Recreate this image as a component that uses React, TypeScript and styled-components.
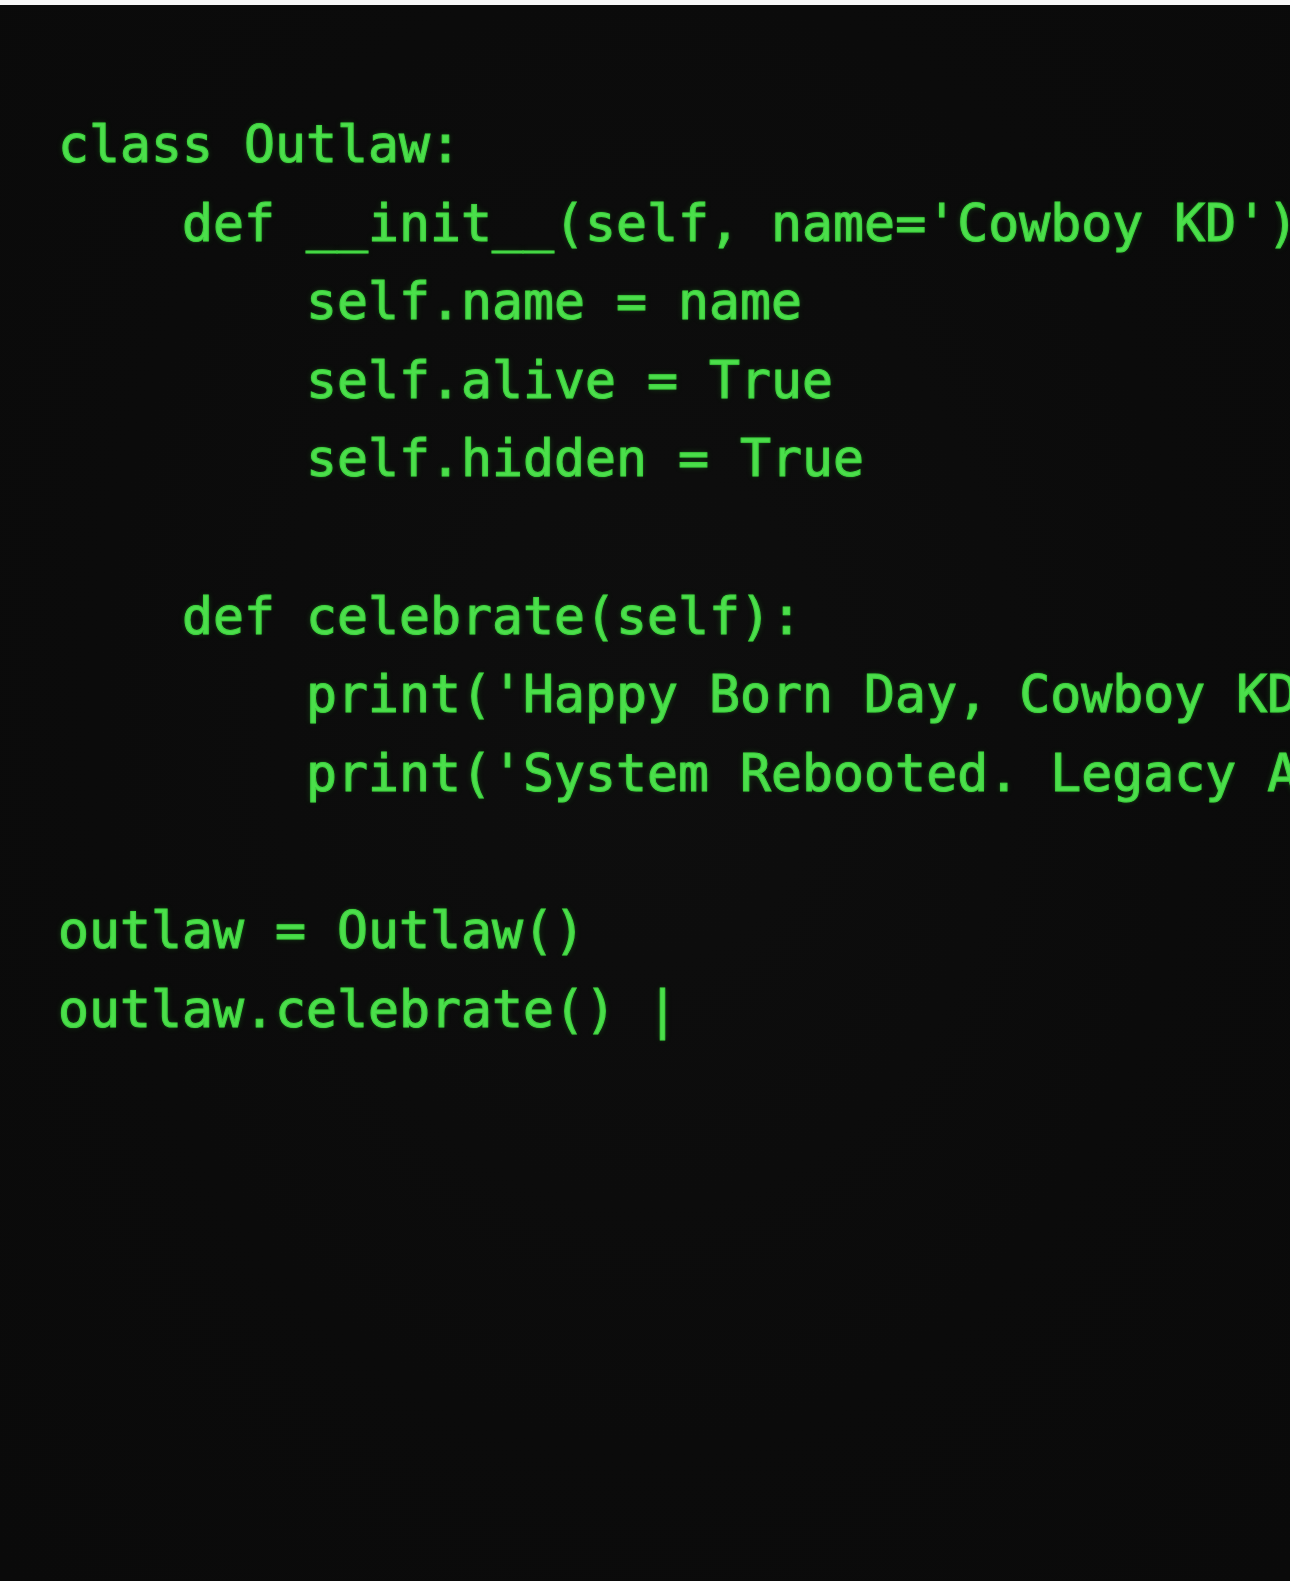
import React from "react";
import styled, { createGlobalStyle } from "styled-components";

const Global = createGlobalStyle`
  html, body {
    margin: 0;
    padding: 0;
    background: #0b0b0b;
  }
  body {
    width: 1290px;
    height: 1581px;
    overflow: hidden;
  }
`;

const Screen = styled.div`
  width: 1290px;
  height: 1581px;
  display: flex;
  flex-direction: column;
  background: #0b0b0b;
  overflow: hidden;
`;

const TopStrip = styled.div`
  height: 5px;
  flex: none;
  background: #f7f7f7;
`;

const Terminal = styled.div`
  flex: 1;
  padding: 100px 0 0 58px;
  background: radial-gradient(ellipse at 50% 45%, #0e0e0e 0%, #0b0b0b 60%, #0a0a0a 100%);
  overflow: hidden;
`;

const Code = styled.pre`
  margin: 0;
  font-family: "DejaVu Sans Mono", "Liberation Mono", monospace;
  font-weight: normal;
  font-size: 51.5px;
  line-height: 78.6px;
  color: #4bdf4b;
  -webkit-text-stroke: 1.1px #3fd23f;
  text-shadow: 0 0 2px rgba(50, 210, 50, 0.7), 0 0 6px rgba(50, 210, 50, 0.25);
  white-space: pre;
`;

const Line = styled.div<{ $indent: number }>`
  padding-left: ${(p) => p.$indent * 0.602}em;
  min-height: 78.6px;
  white-space: pre;
`;

const lines: [number, string][] = [
  [0, "class Outlaw:"],
  [4, "def __init__(self, name='Cowboy KD'):"],
  [8, "self.name = name"],
  [8, "self.alive = True"],
  [8, "self.hidden = True"],
  [0, ""],
  [4, "def celebrate(self):"],
  [8, "print('Happy Born Day, Cowboy KD!')"],
  [8, "print('System Rebooted. Legacy Active.')"],
  [0, ""],
  [0, "outlaw = Outlaw()"],
  [0, "outlaw.celebrate() |"],
];

export default function App() {
  return (
    <>
      <Global />
      <Screen>
        <TopStrip />
        <Terminal>
          <Code>
            {lines.map(([indent, text], i) => (
              <Line key={i} $indent={indent}>
                {text}
              </Line>
            ))}
          </Code>
        </Terminal>
      </Screen>
    </>
  );
}
